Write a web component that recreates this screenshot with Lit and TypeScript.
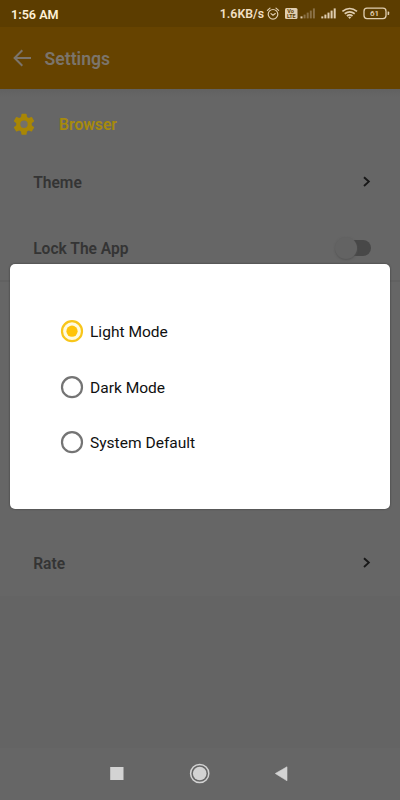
import { LitElement, html, css, svg } from "lit";
import { customElement } from "lit/decorators.js";

@customElement("app-root")
export class AppRoot extends LitElement {
  static styles = css`
    :host { display: block; font-family: Roboto, "Noto Sans", sans-serif; }
    * { box-sizing: border-box; }
    svg { display: block; flex: none; }
    .screen { position: relative; width: 400px; height: 800px; overflow: hidden; background: #666; display: flex; flex-direction: column; }
    .status { height: 27px; flex: none; background: #5c3d00; color: #fff1d8; display: flex; align-items: center; justify-content: space-between; padding: 0 10px 0 11px; }
    .time { font-size: 12.6px; font-weight: 600; padding-top: 1px; }
    .sys { display: flex; align-items: center; font-size: 12.3px; font-weight: 600; color: #f0dfc4; padding-top: 1px; }
    .bar { height: 62px; flex: none; background: #664300; display: flex; align-items: center; padding-left: 13px; gap: 12.6px; color: #7b746b; font-size: 17.6px; font-weight: 600; }
    .bar span { padding-top: 1px; }
    .head { height: 71px; flex: none; display: flex; align-items: center; padding-left: 11px; gap: 22px; color: #a78a0c; font-size: 15.7px; font-weight: 600; background: linear-gradient(#616161, #666 8px); }
    .row { display: flex; flex: none; align-items: center; justify-content: space-between; padding: 0 28px 0 33.2px; height: 66px; color: #343434; font-size: 15.6px; font-weight: 600; }
    .row > span { padding-top: 1px; }
    .theme { height: 44px; }
    .lock { height: 88px; }
    .hidden { height: 250px; flex: none; margin-top: -12px; border-top: 2px solid #616161; }
    .toggle { width: 38px; height: 24px; position: relative; }
    .track { position: absolute; left: 9px; top: 4px; width: 28px; height: 16px; border-radius: 8px; background: #484848; }
    .knob { position: absolute; left: 1px; top: 1px; width: 22px; height: 22px; border-radius: 50%; background: #636363; box-shadow: 0 1px 2px #555; }
    .foot { flex: 1; background: #646464; }
    .nav { height: 52px; flex: none; background: #666; }
    .dialog { position: absolute; left: 10px; top: 264px; width: 380px; height: 245px; border-radius: 5px; background: #fff; box-shadow: 0 0 2px #333; display: flex; flex-direction: column; padding: 39.5px 50px 0; }
    .option { height: 55.6px; flex: none; display: flex; align-items: center; gap: 6px; color: #101010; font-size: 15.55px; }
    .option span { padding-top: 2px; }
  `;

  private chevron() {
    return html`<svg width="10" height="14" viewBox="0 0 10 14"><path d="M2 2.2 6.8 6.6 2 11" fill="none" stroke="#181818" stroke-width="1.9"/></svg>`;
  }

  private option(label: string, selected = false) {
    return html`<div class="option">
      <svg width="24" height="24" viewBox="0 0 24 24">
        <circle cx="12" cy="12.2" r="10" fill=${selected ? "#fffbe0" : "#fff"} stroke=${selected ? "#f8c61b" : "#747474"} stroke-width="2.2"/>
        ${selected ? svg`<circle cx="12" cy="12.2" r="5.6" fill="#ffc40a"/>` : null}
      </svg><span>${label}</span></div>`;
  }

  private statusIcons() {
    return html`<svg width="126" height="18" viewBox="264 5 126 18">
      <g fill="none" stroke="#e0ceb0" stroke-width="1.2" stroke-linecap="round">
        <circle cx="273" cy="14.3" r="4.8"/>
        <path d="M267.4 10.4l2.6-2.3M278.6 10.4 276 8.1M271 13.6l2 1.7 2.3-1.7"/>
      </g>
      <rect x="285" y="8" width="12.5" height="11" rx="1.5" fill="#e0ceb0"/>
      <g fill="#5c3d00" font-weight="700" text-anchor="middle" font-family="Roboto">
        <text x="290.5" y="13.2" font-size="5.6">Vo</text>
        <text x="291.3" y="18.2" font-size="5.4">LTE</text>
      </g>
      <g fill="#8a7146">
        <rect x="300.5" y="16.4" width="2" height="2" fill="#e0ceb0"/><rect x="303.6" y="14.6" width="2" height="3.8"/><rect x="306.7" y="12.6" width="2" height="5.8"/><rect x="309.8" y="10.6" width="2" height="7.8"/><rect x="312.9" y="8.4" width="2" height="10"/>
      </g>
      <g fill="#e0ceb0">
        <rect x="321.3" y="16.4" width="2" height="2"/><rect x="324.4" y="14.6" width="2" height="3.8"/><rect x="327.5" y="12.6" width="2" height="5.8"/><rect x="330.6" y="10.6" width="2" height="7.8"/><rect x="333.7" y="8.4" width="2" height="10"/>
      </g>
      <g fill="none" stroke="#e0ceb0" stroke-width="1.7">
        <path d="M342.4 11.3Q349.7 5.7 357 11.3M344.7 13.7Q349.7 9.9 354.7 13.7M346.9 16Q349.7 13.9 352.5 16"/>
      </g>
      <path d="M348.1 17.1Q349.7 16.1 351.3 17.1L349.7 19Z" fill="#e0ceb0"/>
      <rect x="364" y="8.2" width="22" height="10.4" rx="3" fill="none" stroke="#e0ceb0" stroke-width="1.3"/>
      <path d="M387.6 11.5h.8q.8 0 .8 .8v2q0 .8-.8 .8h-.8z" fill="#e0ceb0"/>
      <text x="374.6" y="16.3" font-size="8" font-weight="600" font-family="Roboto" text-anchor="middle" fill="#e0ceb0">61</text>
    </svg>`;
  }

  render() {
    return html`<div class="screen">
      <div class="status"><span class="time">1:56 AM</span><div class="sys"><span>1.6KB/s</span>${this.statusIcons()}</div></div>
      <div class="bar">
        <svg width="19" height="18" viewBox="0 0 19 18"><path d="M18 9H2M9.3 1.3 1.6 9 9.3 16.7" fill="none" stroke="#7b746b" stroke-width="2"/></svg>
        <span>Settings</span>
      </div>
      <div class="head">
        <svg width="26" height="26" viewBox="0 .7 24 24"><circle cx="12" cy="12" r="4" fill="#74716a"/><path fill="#a88605" d="M19.14 12.94c.04-.3.06-.61.06-.94 0-.32-.02-.64-.07-.94l2.03-1.58a.49.49 0 0 0 .12-.61l-1.92-3.32a.49.49 0 0 0-.59-.22l-2.39.96c-.5-.38-1.03-.7-1.62-.94l-.36-2.54a.48.48 0 0 0-.48-.41h-3.84a.47.47 0 0 0-.47.41l-.36 2.54c-.59.24-1.13.57-1.62.94l-2.39-.96a.48.48 0 0 0-.59.22L2.74 8.87a.47.47 0 0 0 .12.61l2.03 1.58c-.05.3-.09.63-.09.94s.02.64.07.94l-2.03 1.58a.49.49 0 0 0-.12.61l1.92 3.32c.12.22.37.29.59.22l2.39-.96c.5.38 1.03.7 1.62.94l.36 2.54c.05.24.24.41.48.41h3.84c.24 0 .44-.17.47-.41l.36-2.54c.59-.24 1.13-.56 1.62-.94l2.39.96c.22.08.47 0 .59-.22l1.92-3.32a.48.48 0 0 0-.12-.61l-2.01-1.58zM12 15.4a3.4 3.4 0 1 1 0-6.8 3.4 3.4 0 0 1 0 6.8z"/></svg>
        <span>Browser</span>
      </div>
      <div class="row theme"><span>Theme</span>${this.chevron()}</div>
      <div class="row lock"><span>Lock The App</span><div class="toggle"><div class="track"></div><div class="knob"></div></div></div>
      <div class="hidden"></div>
      <div class="row"><span>Rate</span>${this.chevron()}</div>
      <div class="foot"></div>
      <div class="nav">
        <svg width="400" height="52" viewBox="0 748 400 52">
          <rect x="110.2" y="767" width="13.3" height="13" fill="#d3d3d3"/>
          <circle cx="199.7" cy="773.5" r="9.1" fill="none" stroke="#d3d3d3" stroke-width="1.5"/>
          <circle cx="199.7" cy="773.5" r="6.8" fill="#d3d3d3"/>
          <path d="M275.3 773.5 287 766.8v14z" fill="#d3d3d3" stroke="#d3d3d3" stroke-width=".6" stroke-linejoin="round"/>
        </svg>
      </div>
      <div class="dialog">${this.option("Light Mode", true)}${this.option("Dark Mode")}${this.option("System Default")}</div>
    </div>`;
  }
}
